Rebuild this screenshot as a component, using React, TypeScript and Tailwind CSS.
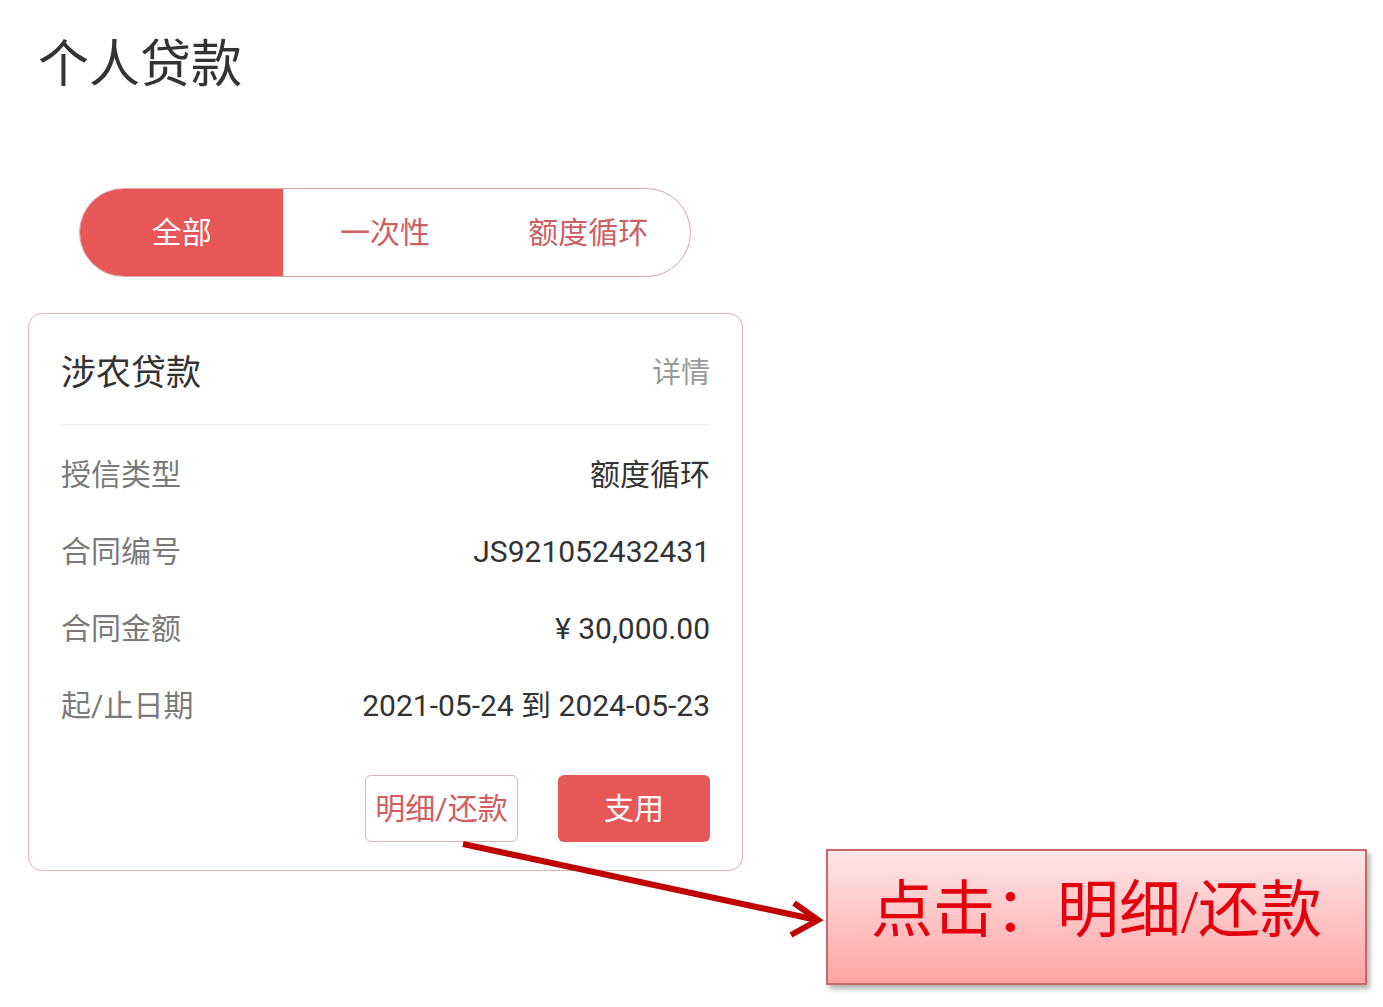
import React from 'react'

const rows = [
  { label: '授信类型', value: '额度循环' },
  { label: '合同编号', value: 'JS921052432431' },
  { label: '合同金额', value: '¥ 30,000.00' },
  { label: '起/止日期', value: '2021-05-24 到 2024-05-23' },
]

const tabs = ['全部', '一次性', '额度循环']

export default function App() {
  return (
    <div
      className="relative w-[1383px] h-[1007px] bg-white overflow-hidden"
      style={{ fontFamily: 'Roboto, "Noto Sans CJK SC", sans-serif' }}
    >
      <div className="flex flex-col pt-[40px] pl-[28px]">
        <h1 className="ml-[10px] text-[51px] leading-[50px] text-[#333] font-normal">个人贷款</h1>

        {/* tabs */}
        <div className="ml-[51px] mt-[98px] flex w-[612px] h-[89px] rounded-full border border-[#d9a6ac] overflow-hidden">
          {tabs.map((t, i) => (
            <div
              key={t}
              className={`flex-1 flex items-center justify-center text-[30px] ${
                i === 0 ? 'bg-[#e85757] text-white' : 'text-[#cc5f63]'
              }`}
            >
              {t}
            </div>
          ))}
        </div>

        {/* card */}
        <div className="mt-[36px] w-[715px] rounded-[14px] border border-[#e2b3b6] px-8 pb-[28px]">
          <div className="flex items-center justify-between h-[111px] pt-[10px] border-b border-[#eeeeee]">
            <span className="text-[35px] text-[#333]">涉农贷款</span>
            <span className="text-[29px] text-[#9a9a9a]">详情</span>
          </div>
          <div className="pt-[11px]">
            {rows.map(r => (
              <div key={r.label} className="flex items-center justify-between h-[77px] text-[30px]">
                <span className="text-[#7a7a7a]">{r.label}</span>
                <span className="text-[#333]">{r.value}</span>
              </div>
            ))}
          </div>
          <div className="mt-[31px] flex justify-end gap-[40px]">
            <button className="w-[153px] h-[67px] rounded-[6px] border border-[#dcb4b8] text-[30px] text-[#d25c60] bg-white">
              明细/还款
            </button>
            <button className="w-[152px] h-[67px] rounded-[6px] bg-[#e85757] text-[30px] text-white">
              支用
            </button>
          </div>
        </div>
      </div>

      {/* annotation arrow */}
      <svg className="absolute left-0 top-0 pointer-events-none" width="1383" height="1007">
        <line x1="463" y1="844" x2="817" y2="920" stroke="#c00000" strokeWidth="6" />
        <polyline points="794,903 818,920 791,935" fill="none" stroke="#c00000" strokeWidth="6" strokeLinejoin="miter" />
      </svg>

      {/* annotation callout */}
      <div
        className="absolute left-[826px] top-[849px] w-[541px] h-[136px] flex items-center justify-center border-2 border-[#c46a6a] bg-gradient-to-b from-[#ffe6e6] to-[#ffa4a4] shadow-[3px_4px_5px_rgba(0,0,0,0.3)] pb-[12px] text-[62px] text-[#e3000f]"
        style={{ fontFamily: '"Liberation Serif", "Noto Sans CJK SC", serif' }}
      >
        点击：明细/还款
      </div>
    </div>
  )
}
